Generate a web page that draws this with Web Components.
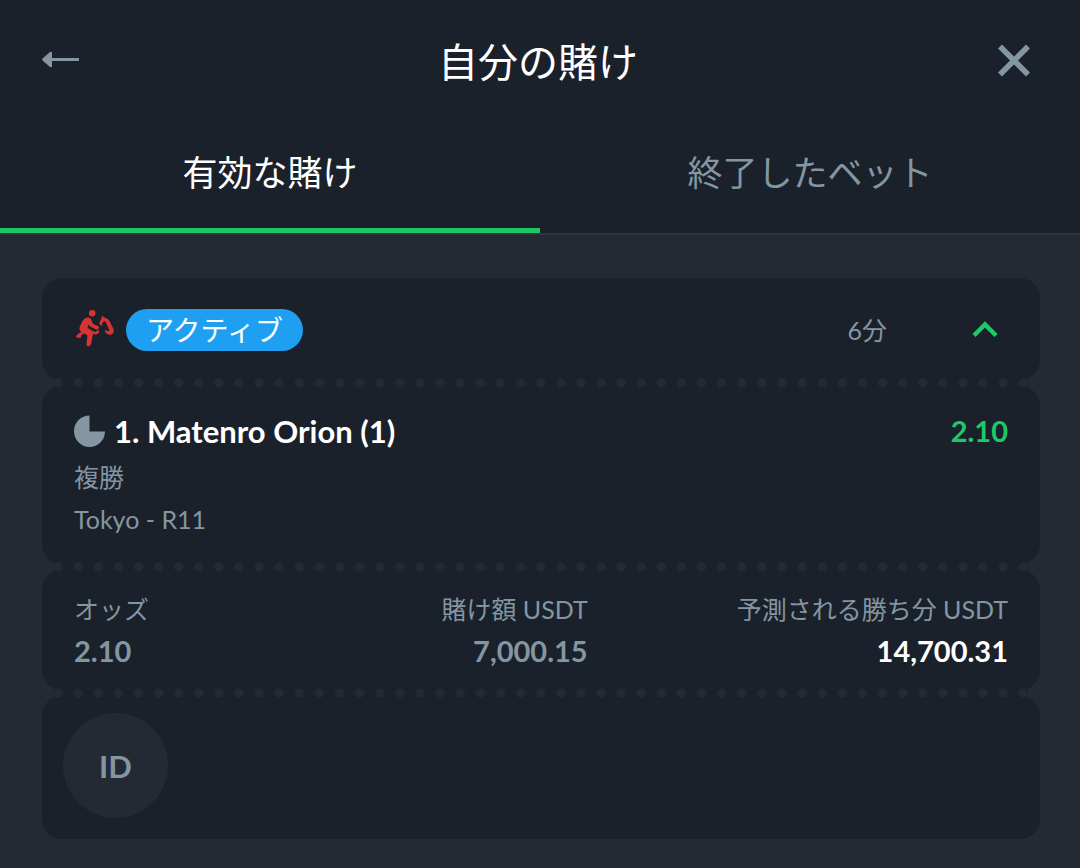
<!DOCTYPE html>
<html lang="ja">
<head>
<meta charset="utf-8">
<meta name="viewport" content="width=device-width, initial-scale=1">
<title>自分の賭け</title>
<style>
  :root {
    --surface: #1b212b;
    --page: #242a34;
    --line: #2f343e;
    --muted: #8496a1;
    --green: #1fc866;
    --blue: #1e9ff2;
    --red: #d63434;
  }

  body {
    margin: 0;
    min-height: 100vh;
    background: var(--page);
    color: #fff;
    font-family: Lato, "Noto Sans CJK JP", sans-serif;
    font-size: 25px;
    line-height: 42px;
  }
</style>
</head>
<body>
<my-bets></my-bets>

<script>
class BetsHeader extends HTMLElement {
  constructor () {
    super()
    this.shadow = this.attachShadow({ mode: 'open' })
  }

  connectedCallback () {
    this.render()
  }

  render () {
    this.shadow.innerHTML =
      /* html */`
      <style>
        :host {
          display: flex;
          align-items: center;
          justify-content: space-between;
          padding: 28px 46px 22px 42px;
          background: var(--surface);
        }

        h1 {
          margin: 0;
          font-size: 40px;
          font-weight: 400;
          line-height: 68px;
        }

        button {
          display: flex;
          padding: 0;
          border: 0;
          background: none;
          color: var(--muted);
          cursor: pointer;
        }
      </style>

      <button type="button" aria-label="戻る">
        <svg width="44" height="44" viewBox="0 0 44 44" fill="currentColor">
          <path d="M0.5 20.500 Q0 19.500 0.5 18.500 L8 12 Q10 11 10 13 V18 H37 V21 H10 V26 Q10 28 8 27 Z"/>
        </svg>
      </button>
      <h1><slot></slot></h1>
      <button type="button" aria-label="閉じる">
        <svg width="44" height="44" viewBox="0 0 44 44" fill="none" stroke="currentColor" stroke-width="5.5">
          <path d="M10 6.500 L38 34.500 M38 6.500 L10 34.500"/>
        </svg>
      </button>
      `
  }
}

customElements.define('bets-header', BetsHeader)

class BetsTabs extends HTMLElement {
  constructor () {
    super()
    this.shadow = this.attachShadow({ mode: 'open' })
  }

  connectedCallback () {
    this.render()
  }

  render () {
    this.shadow.innerHTML =
      /* html */`
      <style>
        :host {
          display: block;
          background: var(--surface);
          border-bottom: 2px solid var(--line);
        }

        .tabs {
          display: grid;
          grid-template-columns: 1fr 1fr;
        }

        button {
          padding: 33px 0 35px;
          border: 0;
          border-bottom: 5px solid transparent;
          background: none;
          color: var(--muted);
          font: inherit;
          font-size: 35px;
          line-height: 42px;
          cursor: pointer;
        }

        button[aria-selected="true"] {
          border-color: var(--green);
          color: #fff;
        }
      </style>

      <div class="tabs" role="tablist">
        <button type="button" role="tab" aria-selected="true">有効な賭け</button>
        <button type="button" role="tab" aria-selected="false">終了したベット</button>
      </div>
      `

    const tabs = this.shadow.querySelectorAll('button')
    tabs.forEach(tab => {
      tab.addEventListener('click', () => {
        tabs.forEach(other => other.setAttribute('aria-selected', other === tab))
      })
    })
  }
}

customElements.define('bets-tabs', BetsTabs)

class TicketPanel extends HTMLElement {
  constructor () {
    super()
    this.shadow = this.attachShadow({ mode: 'open' })
  }

  connectedCallback () {
    this.render()
  }

  render () {
    this.shadow.innerHTML =
      /* html */`
      <style>
        :host {
          display: block;
          padding: var(--panel-padding, 20px 32px);
          border-radius: 20px;
          background: var(--surface);
        }
      </style>

      <slot></slot>
      `
  }
}

customElements.define('ticket-panel', TicketPanel)

// Perforated strip that joins two panels
class TicketSeam extends HTMLElement {
  constructor () {
    super()
    this.shadow = this.attachShadow({ mode: 'open' })
  }

  connectedCallback () {
    this.render()
  }

  render () {
    this.shadow.innerHTML =
      /* html */`
      <style>
        :host {
          display: block;
          position: relative;
          height: 10px;
          margin: -2px 6px;
          background:
            radial-gradient(circle, var(--page) 4px, transparent 5px) 0 0 / 20px 10px round no-repeat,
            linear-gradient(var(--surface), var(--surface)) center / calc(100% - 12px) 8px no-repeat;
        }
      </style>
      `
  }
}

customElements.define('ticket-seam', TicketSeam)

class BetStatus extends HTMLElement {
  constructor () {
    super()
    this.shadow = this.attachShadow({ mode: 'open' })
  }

  connectedCallback () {
    this.render()
  }

  render () {
    this.shadow.innerHTML =
      /* html */`
      <style>
        :host {
          display: flex;
          align-items: center;
        }

        .sport {
          margin-right: 10px;
          color: var(--red);
        }

        .chip {
          padding: 0 20px;
          border-radius: 21px;
          background: var(--blue);
          font-size: 28px;
        }

        .time {
          margin-left: auto;
          color: var(--muted);
        }

        button {
          display: flex;
          margin-left: 77px;
          padding: 0;
          border: 0;
          background: none;
          color: var(--green);
          cursor: pointer;
        }
      </style>

      <svg class="sport" width="42" height="42" viewBox="0 0 42 42" fill="none" stroke="currentColor" stroke-linecap="round" stroke-linejoin="round">
        <circle cx="18.200" cy="4.200" r="3.300" fill="currentColor" stroke="none"/>
        <path fill="currentColor" stroke="none" d="M11 9.500 Q15 7.500 17 10 L19 15 L24 17 Q26 18.500 24.500 20 Q23 21 21 20 L16 17.500 L14.500 15.500 L13.500 19 L18 21.500 Q19.500 23 19 25 L17 35 Q16 38 13.500 37 Q12 36 12.500 34 L13.500 26.500 L7 22.500 Q4.500 20.500 6 17 L8.500 12 Q9.500 10 11 9.500 Z"/>
        <path stroke-width="2.600" d="M9 23.500 Q6 25 3.500 27.500 L6 27.500 M19.500 23.500 Q22 25.500 24 22.500"/>
        <path fill="currentColor" stroke="none" d="M25 14.500 L27.500 9.500 L28 6.500 L30 8.500 Q34 9 36 13 L39.500 20 Q40.500 24 37.500 25.500 Q34 26.500 31.500 23.500 L30.500 20.500 Q33.500 23 35.500 21.500 L31.500 12.500 Q29.500 11.500 28.500 14 L27.500 17 Z"/>
      </svg>
      <span class="chip">アクティブ</span>
      <span class="time">6分</span>
      <button type="button" aria-label="閉じる" aria-expanded="true">
        <svg width="42" height="42" viewBox="0 0 42 42" fill="none" stroke="currentColor" stroke-width="4.5">
          <path d="M10 26.500 L21 15.500 L32 26.500"/>
        </svg>
      </button>
      `
  }
}

customElements.define('bet-status', BetStatus)

class BetSelection extends HTMLElement {
  constructor () {
    super()
    this.shadow = this.attachShadow({ mode: 'open' })
  }

  connectedCallback () {
    this.render()
  }

  render () {
    this.shadow.innerHTML =
      /* html */`
      <style>
        :host {
          display: block;
          color: var(--muted);
        }

        .row {
          display: flex;
          align-items: center;
          margin-bottom: 3px;
          font-size: 29px;
          font-weight: 700;
          line-height: 44px;
        }

        svg {
          margin-right: 8px;
        }

        h2 {
          margin: 0;
          color: #fff;
          font-size: 31px;
        }

        .odds {
          margin-left: auto;
          color: var(--green);
        }

        p {
          margin: 0;
        }
      </style>

      <div class="row">
        <svg width="32" height="32" viewBox="0 0 32 32" fill="currentColor">
          <path d="M15.500 0.5 A15.500 15.750 0 1 0 31 16.500 H15.500 Z"/>
        </svg>
        <h2><slot name="runner"></slot></h2>
        <span class="odds"><slot name="odds"></slot></span>
      </div>
      <p><slot name="market"></slot></p>
      <p><slot name="event"></slot></p>
      `
  }
}

customElements.define('bet-selection', BetSelection)

class BetSummary extends HTMLElement {
  constructor () {
    super()
    this.shadow = this.attachShadow({ mode: 'open' })
  }

  connectedCallback () {
    this.render()
  }

  render () {
    this.shadow.innerHTML =
      /* html */`
      <style>
        dl {
          display: grid;
          grid-template-columns: 5fr 6fr 9fr;
          margin: 0;
          color: var(--muted);
          text-align: right;
        }

        div:first-child {
          text-align: left;
        }

        dd {
          margin: 0;
          font-size: 29px;
          font-weight: 700;
        }

        .payout {
          color: #fff;
        }
      </style>

      <dl>
        <div>
          <dt>オッズ</dt>
          <dd>2.10</dd>
        </div>
        <div>
          <dt>賭け額 USDT</dt>
          <dd>7,000.15</dd>
        </div>
        <div>
          <dt>予測される勝ち分 USDT</dt>
          <dd class="payout">14,700.31</dd>
        </div>
      </dl>
      `
  }
}

customElements.define('bet-summary', BetSummary)

class RoundButton extends HTMLElement {
  constructor () {
    super()
    this.shadow = this.attachShadow({ mode: 'open' })
  }

  connectedCallback () {
    this.render()
  }

  render () {
    this.shadow.innerHTML =
      /* html */`
      <style>
        :host {
          display: block;
        }

        button {
          display: block;
          width: 105px;
          height: 105px;
          padding: 0;
          border: 0;
          border-radius: 50%;
          background: var(--page);
          color: var(--muted);
          font: inherit;
          font-size: 31px;
          font-weight: 700;
          cursor: pointer;
        }
      </style>

      <button type="button"><slot></slot></button>
      `
  }
}

customElements.define('round-button', RoundButton)

class MyBets extends HTMLElement {
  constructor () {
    super()
    this.shadow = this.attachShadow({ mode: 'open' })
  }

  connectedCallback () {
    this.render()
  }

  render () {
    this.shadow.innerHTML =
      /* html */`
      <style>
        :host {
          display: block;
        }

        main {
          padding: 43px 40px 29px 42px;
        }

        .status {
          --panel-padding: 31px 34px 29px 32px;
        }

        .selection {
          --panel-padding: 23px 32px 24px;
        }

        .summary {
          --panel-padding: 18px 32px;
        }

        .actions {
          --panel-padding: 17px 21px 21px;
        }
      </style>

      <bets-header>自分の賭け</bets-header>
      <bets-tabs></bets-tabs>
      <main>
        <ticket-panel class="status">
          <bet-status></bet-status>
        </ticket-panel>
        <ticket-seam></ticket-seam>
        <ticket-panel class="selection">
          <bet-selection>
            <span slot="runner">1. Matenro Orion (1)</span>
            <span slot="odds">2.10</span>
            <span slot="market">複勝</span>
            <span slot="event">Tokyo - R11</span>
          </bet-selection>
        </ticket-panel>
        <ticket-seam></ticket-seam>
        <ticket-panel class="summary">
          <bet-summary></bet-summary>
        </ticket-panel>
        <ticket-seam></ticket-seam>
        <ticket-panel class="actions">
          <round-button>ID</round-button>
        </ticket-panel>
      </main>
      `
  }
}

customElements.define('my-bets', MyBets)
</script>
</body>
</html>
